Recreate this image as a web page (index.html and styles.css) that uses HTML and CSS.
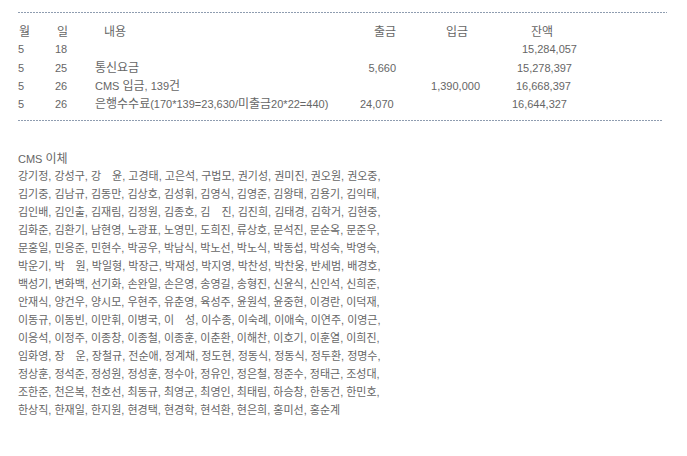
FILE: index.html
```html
<!DOCTYPE html>
<html lang="ko">
<head>
<meta charset="utf-8">
<title>CMS 이체 내역</title>
<link rel="stylesheet" href="styles.css">
</head>
<body>
<div class="page">
  <div class="rule rule-top"></div>
  <div class="ledger">
    <div class="row head">
      <span class="c1 h1"><span class="ko">월</span></span>
      <span class="c2 h2"><span class="ko">일</span></span>
      <span class="c3 h3"><span class="ko">내용</span></span>
      <span class="c4 h4"><span class="ko">출금</span></span>
      <span class="c5 h5"><span class="ko">입금</span></span>
      <span class="c6 h6"><span class="ko">잔액</span></span>
    </div>
    <div class="row r1">
      <span class="c1">5</span>
      <span class="c2">18</span>
      <span class="c3"></span>
      <span class="c4"></span>
      <span class="c5"></span>
      <span class="c6">15,284,057</span>
    </div>
    <div class="row r2">
      <span class="c1">5</span>
      <span class="c2">25</span>
      <span class="c3"><span class="ko">통신요금</span></span>
      <span class="c4">5,660</span>
      <span class="c5"></span>
      <span class="c6">15,278,397</span>
    </div>
    <div class="row r3">
      <span class="c1">5</span>
      <span class="c2">26</span>
      <span class="c3">CMS <span class="ko">입금</span>, 139<span class="ko">건</span></span>
      <span class="c4"></span>
      <span class="c5">1,390,000</span>
      <span class="c6">16,668,397</span>
    </div>
    <div class="row r4">
      <span class="c1">5</span>
      <span class="c2">26</span>
      <span class="c3"><span class="ko">은행수수료</span>(170*139=23,630/<span class="ko">미출금</span>20*22=440)</span>
      <span class="c4">24,070</span>
      <span class="c5"></span>
      <span class="c6">16,644,327</span>
    </div>
  </div>
  <div class="rule rule-bottom"></div>

  <div class="cms">
    <div class="cms-title">CMS <span class="ko">이체</span></div>
    <p class="names">
      강기정, 강성구, 강　윤, 고경태, 고은석, 구법모, 권기성, 권미진, 권오원, 권오중,<br>
      김기중, 김남규, 김동만, 김상호, 김성휘, 김영식, 김영준, 김왕태, 김용기, 김익태,<br>
      김인배, 김인출, 김재림, 김정원, 김종호, 김　진, 김진희, 김태경, 김학거, 김현중,<br>
      김화준, 김환기, 남현영, 노광표, 노영민, 도희진, 류상호, 문석진, 문순옥, 문준우,<br>
      문홍일, 민응준, 민현수, 박공우, 박남식, 박노선, 박노식, 박동섭, 박성숙, 박영숙,<br>
      박운기, 박　원, 박일형, 박장근, 박재성, 박지영, 박찬성, 박찬웅, 반세범, 배경호,<br>
      백성기, 변화백, 선기화, 손완일, 손은영, 송영길, 송형진, 신윤식, 신인석, 신희준,<br>
      안재식, 양건우, 양시모, 우현주, 유춘영, 육성주, 윤원석, 윤중현, 이경란, 이덕재,<br>
      이동규, 이동빈, 이만휘, 이병국, 이　성, 이수종, 이숙례, 이애숙, 이연주, 이영근,<br>
      이응석, 이정주, 이종창, 이종철, 이종훈, 이춘환, 이해찬, 이호기, 이훈열, 이희진,<br>
      임화영, 장　운, 장철규, 전순애, 정계채, 정도현, 정동식, 정동식, 정두환, 정명수,<br>
      정상훈, 정석준, 정성원, 정성훈, 정수아, 정유인, 정은철, 정준수, 정태근, 조성대,<br>
      조한준, 천은복, 천호선, 최동규, 최영군, 최영인, 최태림, 하승창, 한동건, 한민호,<br>
      한상직, 한재일, 한지원, 현경택, 현경학, 현석환, 현은희, 홍미선, 홍순계
    </p>
  </div>
</div>
</body>
</html>
```

FILE: styles.css
```css
html, body {
  margin: 0;
  padding: 0;
  background: #ffffff;
}

body {
  font-family: "Liberation Sans", "Noto Sans CJK KR", sans-serif;
  font-size: 11px;
  color: #666666;
}

.page {
  padding: 12px 0 0 18px;
}

.ko {
  font-family: "Noto Sans CJK KR", sans-serif;
  font-size: 12px;
}

.rule {
  height: 1px;
  background: repeating-linear-gradient(to right, #8f9db0 0 2px, transparent 2px 3px);
}

.rule-top {
  width: 649px;
}

.rule-bottom {
  width: 645px;
  margin-top: 8px;
}

.ledger {
  padding-top: 9px;
}

.row {
  display: grid;
  grid-template-columns: 37px 40px 265px 40px 85px 95px;
  height: 18px;
  align-items: center;
  line-height: 18px;
  white-space: nowrap;
}

.c4, .c5, .c6 {
  text-align: right;
}

.h1 { padding-left: 1px; }
.h2 { padding-left: 2px; }
.h3 { padding-left: 9px; }
.h4 { padding-right: 4px; }
.h5 { padding-right: 17px; }
.h6 { padding-right: 27px; }

.r1 .c6 { padding-right: 3px; }
.r2 .c4 { padding-right: 4px; }
.r2 .c6 { padding-right: 8px; }
.r3 .c5 { padding-right: 5px; }
.r3 .c6 { padding-right: 9px; }
.r4 .c4 { padding-right: 10px; }
.r4 .c6 { padding-right: 13px; }

.cms {
  padding-top: 29px;
}

.cms-title {
  line-height: 16px;
}

.names {
  margin: 0;
  font-family: "Liberation Sans", "Noto Sans CJK KR", sans-serif;
  font-size: 11px;
  line-height: 18px;
  white-space: nowrap;
}
```
